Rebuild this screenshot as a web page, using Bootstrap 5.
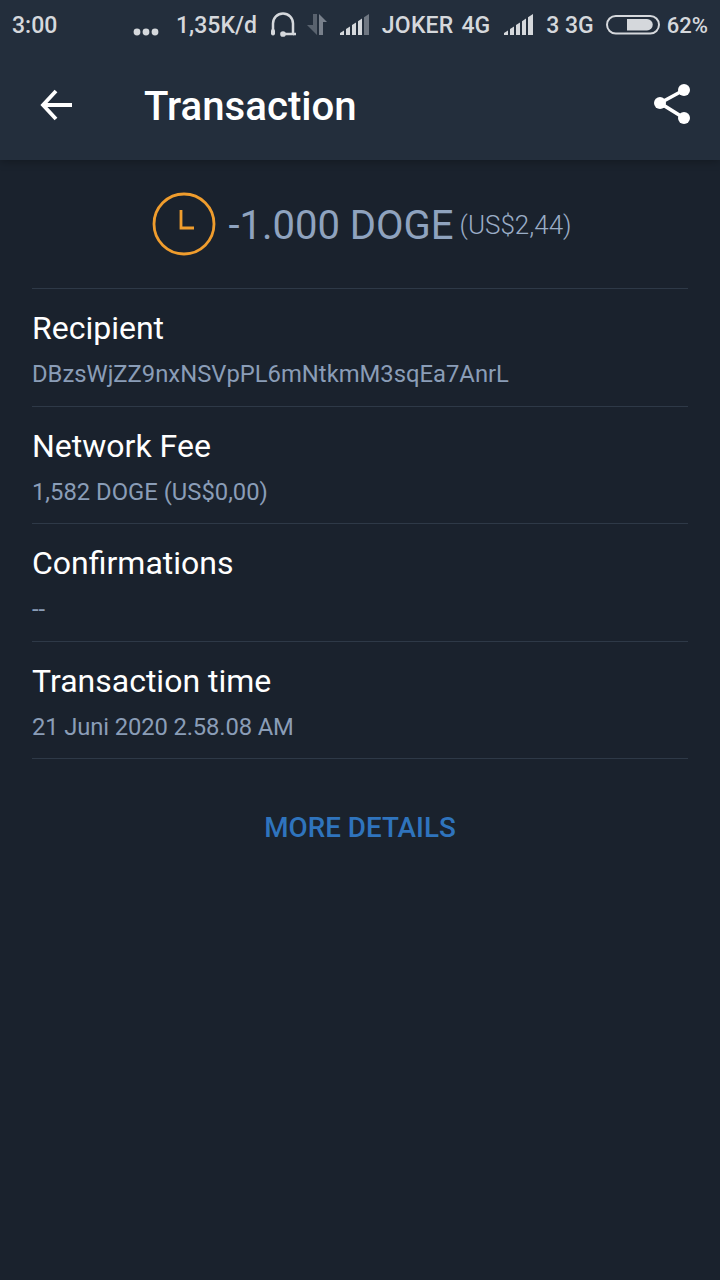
<!DOCTYPE html>
<html lang="en">

<head>
    <meta charset="UTF-8" />
    <title>Transaction</title>
    <link rel="stylesheet" href="https://cdn.jsdelivr.net/npm/bootstrap@5.3.3/dist/css/bootstrap.min.css">
    <script src="https://cdn.jsdelivr.net/npm/bootstrap@5.3.3/dist/js/bootstrap.bundle.min.js"></script>
    <style>
        html, body {
            height: 1280px;
            overflow: hidden;
        }

        body {
            background-color: #1a222d;
            font-family: 'Roboto', 'Liberation Sans', sans-serif;
            color: #fff;
        }

        .app-top {
            height: 160px;
            background-color: #232e3c;
            box-shadow: 0 2px 8px rgba(0, 0, 0, .25);
        }

        .status-line {
            height: 50px;
            padding: 2px 12px 0;
            color: #d5d8dc;
            font-size: 23px;
            font-weight: 500;
            white-space: nowrap;
        }

        .status-line svg {
            display: block;
            flex: none;
        }

        .sb-dots { margin-top: 11px; }
        .sb-speed { margin-left: 17px; }
        .sb-phones { margin: 0 0 2px 13px; }
        .sb-arrows { margin: 0 0 2px 9px; }
        .sb-signal { margin: 0 0 3px 11px; }
        .sb-carrier { margin-left: 12px; letter-spacing: .2px; }
        .sb-net { margin-left: 8px; }
        .sb-signal-two { margin: 0 0 3px 14px; }
        .sb-sim { margin-left: 12px; }
        .sb-battery { margin: 0 0 2px 12px; }
        .sb-percent { margin: 0 0 2px 7px; font-size: 22px; }

        .title-line {
            height: 110px;
            padding: 4px 28px 0 40px;
        }

        .back-icon { margin-bottom: 5px; }
        .share-icon { margin-bottom: 6px; }

        .page-title {
            font-size: 40.2px;
            font-weight: 500;
            margin: 0 0 0 72px;
            line-height: 1;
        }

        .amount-line {
            height: 128px;
            padding: 3px 0 0 4px;
            color: #8fa3bf;
        }

        .clock-icon { margin-bottom: 3px; }

        .amount-main {
            font-size: 40px;
            margin-left: 12px;
        }

        .amount-fiat {
            font-size: 26px;
            font-weight: 300;
            margin-left: 6px;
            color: #9aadc6;
        }

        .info-list {
            margin: 0 32px;
        }

        .info-row {
            height: 117.5px;
            border-top: 1px solid #2e3947;
            padding-top: 21px;
        }

        .info-row:last-child {
            height: 1px;
            padding: 0;
        }

        .info-label {
            font-size: 32px;
            line-height: 36px;
        }

        .info-value {
            font-size: 23.8px;
            line-height: 30px;
            margin-top: 13px;
            color: #8a9db7;
        }

        .value-tight {
            letter-spacing: -.13px;
        }

        .more-link {
            color: #2f74bd;
            font-size: 27.8px;
            font-weight: 500;
            margin-top: 51px;
            padding: 0;
            border: 0;
            line-height: 36px;
        }
    </style>
</head>

<body>

    <!-- Header -->
    <div class="app-top">
        <div class="status-line d-flex align-items-center">
            <span>3:00</span>
            <svg class="sb-dots ms-auto" width="26" height="10" viewBox="0 0 26 10" fill="#d5d8dc">
                <circle cx="4" cy="5" r="3.4" /><circle cx="13" cy="5" r="3.4" /><circle cx="22" cy="5" r="3.4" />
            </svg>
            <span class="sb-speed">1,35K/d</span>
            <svg class="sb-phones" width="28" height="26" viewBox="0 0 28 26" fill="none" stroke="#d5d8dc" stroke-width="2.5">
                <path d="M3 20V11.5a10 10 0 0 1 20 0V22H13" />
                <path d="M23 22h3" />
                <circle cx="13" cy="22" r="1.6" fill="#d5d8dc" />
                <rect x="1" y="17" width="4" height="6.5" rx="2" fill="#d5d8dc" stroke="none" />
            </svg>
            <svg class="sb-arrows" width="22" height="22" viewBox="0 0 22 22">
                <path d="M10 0v21L0 11h6V0z" fill="#59626e" />
                <path d="M12 21V0l8 8h-4v13z" fill="#78808b" />
            </svg>
            <svg class="sb-signal" width="30" height="22" viewBox="0 0 30 22" fill="#d5d8dc">
                <path d="M0 21v-2l4-2.6V21zM6 21v-6l4-2.6V21zM12 21V11l4-2.5V21zM18 21V7.2l4-2.6V21z" />
                <path d="M24 21V3.3L29 0v21z" fill="#6f7782" />
            </svg>
            <span class="sb-carrier">JOKER</span>
            <span class="sb-net">4G</span>
            <svg class="sb-signal-two" width="30" height="22" viewBox="0 0 30 22" fill="#d5d8dc">
                <path d="M0 21v-2l4-2.6V21zM6 21v-6l4-2.6V21zM12 21V11l4-2.5V21zM18 21V7.2l4-2.6V21zM24 21V3.3L29 0v21z" />
            </svg>
            <span class="sb-sim">3 3G</span>
            <svg class="sb-battery" width="54" height="20" viewBox="0 0 54 20" fill="none">
                <rect x="1" y="1" width="52" height="17.5" rx="8.75" stroke="#d5d8dc" stroke-width="2" />
                <path d="M21 4h20a5.75 5.75 0 0 1 0 11.5H21z" fill="#d5d8dc" />
            </svg>
            <span class="sb-percent">62%</span>
        </div>
        <div class="title-line d-flex align-items-center">
            <svg class="back-icon" width="32" height="32" viewBox="0 0 32 32" fill="none" stroke="#fff" stroke-width="3.8">
                <path d="M32 16H3M16 2 3 16l13 14" />
            </svg>
            <h1 class="page-title">Transaction</h1>
            <svg class="share-icon ms-auto" width="40" height="44" viewBox="0 0 40 44" fill="#fff">
                <path d="M32 8 8 21l24 15" fill="none" stroke="#fff" stroke-width="3.6" />
                <circle cx="32" cy="8" r="6" /><circle cx="8" cy="21" r="6" /><circle cx="32" cy="36" r="6" />
            </svg>
        </div>
    </div>

    <!-- Amount -->
    <div class="amount-line d-flex align-items-center justify-content-center">
        <svg class="clock-icon" width="64" height="64" viewBox="0 0 64 64" fill="none" stroke="#f09d2d" stroke-width="2.8">
            <circle cx="32" cy="32" r="30" />
            <path d="M29 18v18h13" />
        </svg>
        <span class="amount-main">-1.000 DOGE</span>
        <span class="amount-fiat">(US$2,44)</span>
    </div>

    <!-- Detail rows -->
    <div class="info-list">
        <div class="info-row">
            <div class="info-label">Recipient</div>
            <div class="info-value">DBzsWjZZ9nxNSVpPL6mNtkmM3sqEa7AnrL</div>
        </div>
        <div class="info-row">
            <div class="info-label">Network Fee</div>
            <div class="info-value">1,582 DOGE (US$0,00)</div>
        </div>
        <div class="info-row">
            <div class="info-label">Confirmations</div>
            <div class="info-value">--</div>
        </div>
        <div class="info-row">
            <div class="info-label">Transaction time</div>
            <div class="info-value value-tight">21 Juni 2020 2.58.08 AM</div>
        </div>
        <div class="info-row"></div>
    </div>

    <div class="text-center">
        <button type="button" class="btn more-link">MORE DETAILS</button>
    </div>

</body>

</html>
